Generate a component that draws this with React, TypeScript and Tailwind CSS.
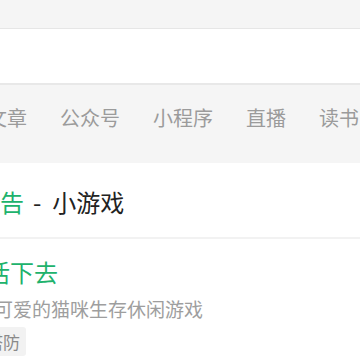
const tabs = ["文章", "公众号", "小程序", "直播", "读书"];

export default function App() {
  return (
    <div
      className="w-[360px] h-[360px] overflow-hidden bg-white"
      style={{ fontFamily: '"Noto Sans CJK SC", "Noto Sans", sans-serif' }}
    >
      {/* top strip */}
      <div className="h-[29px] bg-[#f5f5f5] border-b border-[#e6e6e6]" />

      {/* search box area */}
      <div className="h-[56px] bg-white border-b-2 border-[#e8e8e8]" />

      {/* tabs, scrolled a little to the left */}
      <div className="h-[78px] bg-[#f5f5f5] pt-[19px]">
        <div className="flex gap-[33px] ml-[-13px] whitespace-nowrap text-[20px] leading-[28px] text-[#9b9b9b]">
          {tabs.map((t) => (
            <span key={t} className="shrink-0">
              {t}
            </span>
          ))}
        </div>
      </div>

      {/* section title */}
      <div className="pt-[23px] pb-[19px] border-b-2 border-[#f2f2f2]">
        <h2 className="ml-[-24px] whitespace-nowrap text-[24px] leading-[32px] text-[#222]">
          <span className="text-[#20b26c]">广告</span>
          <span className="ml-[9px] mr-[11px]">-</span>
          小游戏
        </h2>
      </div>

      {/* result item */}
      <div className="pt-[17px]">
        <h3 className="ml-[-14px] whitespace-nowrap text-[24px] leading-[32px] text-[#20b26c]">
          活下去
        </h3>
        <p className="mt-[8px] ml-[-6px] whitespace-nowrap text-[19px] leading-[26px] text-[#9e9e9e]">
          可爱的猫咪生存休闲游戏
        </p>
        <div className="mt-[5px] flex">
          <span className="ml-[-20px] rounded-[3px] bg-[#f2f2f2] px-[6px] h-[29px] flex items-center whitespace-nowrap text-[17px] text-[#8a8a8a]">
            塔防
          </span>
        </div>
      </div>
    </div>
  );
}
